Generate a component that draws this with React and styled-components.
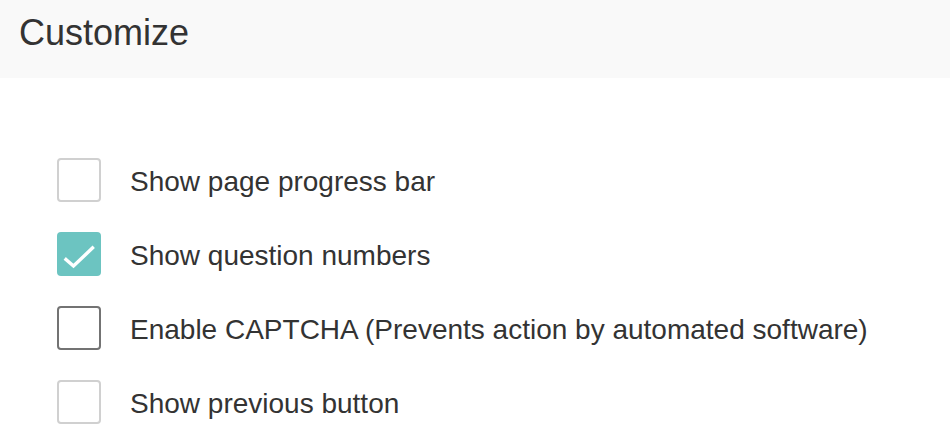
import React from "react";
import styled, { createGlobalStyle } from "styled-components";

const Global = createGlobalStyle`
  html, body { margin: 0; padding: 0; background: #ffffff; }
  body { font-family: "Liberation Sans", Arial, Helvetica, sans-serif; color: #333333; }
`;

const Page = styled.div`
  width: 950px;
  height: 448px;
  overflow: hidden;
  background: #ffffff;
`;

const Header = styled.header`
  box-sizing: border-box;
  height: 78px;
  padding: 12px 19px 0;
  background: #f9f9f9;
`;

const Title = styled.h1`
  margin: 0;
  font-size: 36px;
  font-weight: 400;
  line-height: 41px;
  color: #333333;
`;

const OptionList = styled.ul`
  list-style: none;
  margin: 0;
  padding: 80px 0 0 57px;
  display: flex;
  flex-direction: column;
  gap: 30px;
`;

const Option = styled.li`
  display: flex;
  align-items: center;
  gap: 29px;
  height: 44px;
`;

const Box = styled.span`
  box-sizing: border-box;
  flex: 0 0 44px;
  width: 44px;
  height: 44px;
  border-radius: 4px;
  display: flex;
  align-items: center;
  justify-content: center;
  background: ${(p) => (p.$checked ? "#6cc4c1" : "#ffffff")};
  border: ${(p) =>
    p.$checked ? "none" : p.$focused ? "2px solid #737373" : "2px solid #d0d0d0"};
`;

const Label = styled.span`
  font-size: 28px;
  line-height: 32px;
  padding-top: 3px;
  color: #333333;
  white-space: nowrap;
`;

const Check = () => (
  <svg width="44" height="44" viewBox="0 0 44 44">
    <path
      d="M9 27.5 L16.5 34 L35.5 16"
      fill="none"
      stroke="#ffffff"
      strokeWidth="3.4"
      strokeLinecap="square"
      strokeLinejoin="miter"
    />
  </svg>
);

const options = [
  { label: "Show page progress bar", checked: false },
  { label: "Show question numbers", checked: true },
  { label: "Enable CAPTCHA (Prevents action by automated software)", checked: false, focused: true },
  { label: "Show previous button", checked: false },
];

export default function App() {
  return (
    <Page>
      <Global />
      <Header>
        <Title>Customize</Title>
      </Header>
      <OptionList>
        {options.map((o) => (
          <Option key={o.label}>
            <Box $checked={o.checked} $focused={o.focused}>
              {o.checked && <Check />}
            </Box>
            <Label>{o.label}</Label>
          </Option>
        ))}
      </OptionList>
    </Page>
  );
}
